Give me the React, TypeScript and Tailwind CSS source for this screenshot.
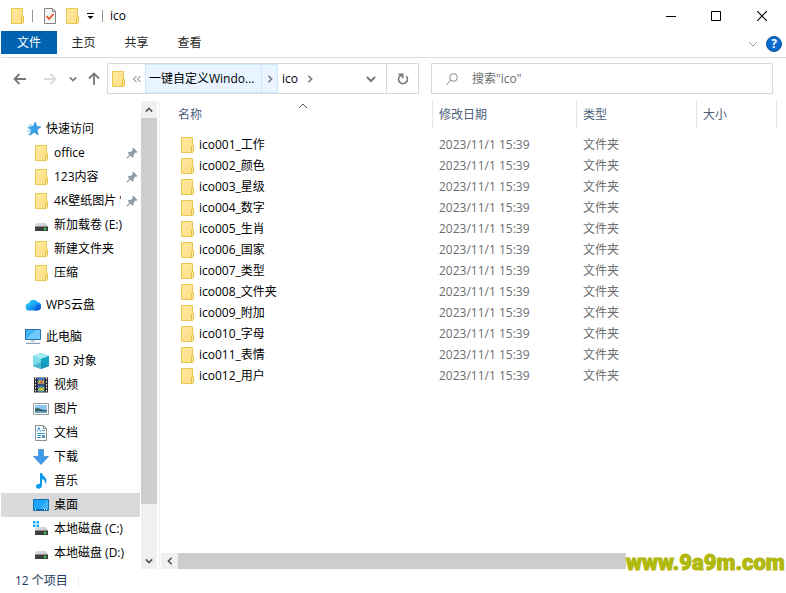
import React from 'react';

type IconProps = { className?: string };

const Svg = ({ children, className = '' }: { children: React.ReactNode; className?: string }) => (
  <svg viewBox="0 0 16 16" className={`h-4 w-4 shrink-0 ${className}`} aria-hidden="true">
    {children}
  </svg>
);

const Folder = ({ className }: IconProps) => (
  <Svg className={className}>
    <path d="M2.5.5h11v15h-11z" fill="#ffe799" stroke="#ebc750" />
    <path d="M3 13l9-12h1v14H3z" fill="#ffe08a" opacity=".7" />
    <path d="M12.500 9.500l.8-1h1.200v6l-1 1h-1z" fill="#ffe9a6" stroke="#e6bf3e" />
  </Svg>
);

const CheckDoc = () => (
  <Svg>
    <path d="M2.5.5h8l3 3v12h-11z" fill="#f4f6f8" stroke="#858585" />
    <path d="M10.500.5v3h3" fill="none" stroke="#858585" />
    <path d="M4.500 8l2.500 3L11.500 6" fill="none" stroke="#e8501e" strokeWidth="1.800" />
  </Svg>
);

const Star = () => (
  <Svg>
    <path d="M10.500 1l1 4.500 4.500.3-4 3 1.300 5.200-4-2.700-4.500 3 1.500-5L3 6l4.500-.300z" fill="#35a3ea" stroke="#1b80c8" strokeWidth=".6" />
    <path d="M4 4h3M2.500 7h3M2 10h3M3 13h2" stroke="#6fc0f2" />
  </Svg>
);

const Drive = ({ system = false }: { system?: boolean }) => (
  <Svg>
    {system && <path d="M0 0h2.500v2.500H0zM3.500 0H6v2.500H3.500zM0 3.500h2.500V6H0zM3.500 3.500H6V6H3.500z" fill="#12b0f0" />}
    <path d="M3.500 6h9.500l2 4H2z" fill="#d4d6d8" />
    <path d="M2 9h13v5H2z" fill="#3c4043" />
    <path d="M2 9.500h13" stroke="#8a8f93" />
    <path d="M11 11h2v2h-2z" fill="#33e04c" />
  </Svg>
);

const Cloud = () => (
  <Svg>
    <defs>
      <linearGradient id="cloud" x1="0" x2="1" y1="0" y2="1">
        <stop offset="0" stopColor="#3fe0f3" />
        <stop offset=".5" stopColor="#18a2f4" />
        <stop offset="1" stopColor="#0a4fdb" />
      </linearGradient>
    </defs>
    <path d="M4.500 13.500a3.600 3.600 0 01-.500-7.200 4.600 4.600 0 018.500-1.200 4.200 4.200 0 01-.500 8.400z" fill="url(#cloud)" />
    <path d="M9 13.500c2-1 1.500-6 4.500-6.200a3.200 3.200 0 01-1 6.200z" fill="#0b58df" opacity=".7" />
  </Svg>
);

const Computer = () => (
  <Svg>
    <path d="M.5.5h15v10H.5z" fill="#45b4f5" stroke="#2574a8" />
    <path d="M1 10L11 1h4v9z" fill="#71c8fa" />
    <path d="M6 11h4v2H6z" fill="#c6d2dc" />
    <path d="M2 13h12l1.500 2H.5z" fill="#8fa0b4" />
    <path d="M2 13.500h12" stroke="#dfe5ec" />
  </Svg>
);

const Cube = () => (
  <Svg>
    <path d="M8 0l8 3v10l-8 3-8-3V3z" fill="#27b4d2" />
    <path d="M0 3l8-3 8 3-8 3z" fill="#a5ecf3" />
    <path d="M0 3l8 3v10l-8-3z" fill="#7edce8" />
    <path d="M8 6l8-3v10l-8 3z" fill="#16a3c5" />
    <path d="M0 13l8-4 8 4-8 3z" fill="#0d8cae" opacity=".45" />
  </Svg>
);

const Film = () => (
  <Svg>
    <path d="M1 .5h14v15H1z" fill="#2c2c2e" />
    <path d="M2.500 1v14M13.500 1v14" stroke="#f5f5f5" strokeWidth="1" strokeDasharray="1.500 1.500" />
    <path d="M4.500 1h7v6.500h-7zM4.500 8.500h7V15h-7z" fill="#3d74c2" />
    <path d="M5 5.500l2-3 2 2 2-2v4H5z" fill="#eab62e" />
    <path d="M5 13l2-3 2 1 2-1v4H5z" fill="#b9c52f" />
    <path d="M7.500 4h2v2h-2z" fill="#d8403a" />
  </Svg>
);

const Picture = () => (
  <Svg>
    <path d="M.5 2.500h15v11H.5z" fill="#fff" stroke="#969ba0" />
    <path d="M2 4h12v8H2z" fill="#8fc6ef" />
    <path d="M2 7.500c3-1.500 5 .5 7 1s3 .5 5 .5v2H2z" fill="#36605c" />
    <path d="M2 10.500c4-1 8 0 12-.5V12H2z" fill="#6d9cc0" />
  </Svg>
);

const TextDoc = () => (
  <Svg>
    <path d="M2.5.5h8l3 3v12h-11z" fill="#fff" stroke="#8b9197" />
    <path d="M10.500.5v3h3" fill="none" stroke="#8b9197" />
    <path d="M4 6.500L6 2.500l1.500 4M9 5.500h3M4 8.500h8M4 10.500h4M4 12.500h4" fill="none" stroke="#3d93cd" />
    <path d="M9 10h3v3H9z" fill="#5a97ae" />
  </Svg>
);

const DownArrow = () => (
  <Svg>
    <path d="M5.500.5h5v7h5L8 15.500.5 7.500h5z" fill="#3e9aea" stroke="#2878c4" strokeWidth=".6" />
  </Svg>
);

const Note = () => (
  <Svg>
    <path d="M7 0h2c.3 3 4.500 4 4.500 7.500 0 1.500-.6 2.500-1.500 3.500.6-2.500-.5-4.200-3-5v6.500c0 2-1.500 3.200-3.500 3.200-1.500 0-2.500-.9-2.500-2.200 0-1.800 1.800-3 4-2.700z" fill="#0b9ceb" />
  </Svg>
);

const Desktop = () => (
  <Svg>
    <path d="M.5 2.500h15v11H.5z" fill="#1ca5fa" stroke="#1172b5" />
    <path d="M6 13L14 3h1v10z" fill="#40b6fb" />
    <path d="M1 12.500h14" stroke="#0b65a8" />
    <path d="M2 12.500h1M11 12.500h1M13 12.500h1" stroke="#fff" />
  </Svg>
);

const Pin = () => (
  <svg viewBox="0 0 12 12" className="h-3 w-3 shrink-0" aria-hidden="true">
    <path d="M7 .5L11.500 5l-1 .8-1-.3-2 2.200.2 2-1.200 1L1.800 6l1-1.200 2 .2L6.800 3 6.300 1.500z" fill="#8b99a5" />
    <path d="M4 8L1 11" stroke="#8b99a5" strokeWidth="1.300" />
  </svg>
);

type ChevronProps = { dir: 'up' | 'down' | 'left' | 'right'; size?: string; color?: string; weight?: number };

const chevronPaths = {
  up: 'M1 7l4-4 4 4',
  down: 'M1 3l4 4 4-4',
  left: 'M7 1L3 5l4 4',
  right: 'M3 1l4 4-4 4',
};

const Chevron = ({ dir, size = 'h-2.5 w-2.5', color = 'text-[#555]', weight = 2 }: ChevronProps) => (
  <svg viewBox="0 0 10 10" className={`shrink-0 ${size} ${color}`} fill="none" stroke="currentColor" strokeWidth={weight} aria-hidden="true">
    <path d={chevronPaths[dir]} />
  </svg>
);

const Arrow = ({ className }: IconProps) => (
  <svg viewBox="0 0 14 14" className={`h-3.5 w-3.5 ${className}`} fill="none" stroke="currentColor" strokeWidth="1.800" aria-hidden="true">
    <path d="M13 7H1.500M6.500 2l-5 5 5 5" />
  </svg>
);

const groups: { name: string; icon: React.ReactNode; items: { name: string; icon: React.ReactNode; pinned?: boolean }[] }[] = [
  {
    name: '快速访问',
    icon: <Star />,
    items: [
      { name: 'office', icon: <Folder />, pinned: true },
      { name: '123内容', icon: <Folder />, pinned: true },
      { name: "4K壁纸图片 '", icon: <Folder />, pinned: true },
      { name: '新加载卷 (E:)', icon: <Drive /> },
      { name: '新建文件夹', icon: <Folder /> },
      { name: '压缩', icon: <Folder /> },
    ],
  },
  { name: 'WPS云盘', icon: <Cloud />, items: [] },
  {
    name: '此电脑',
    icon: <Computer />,
    items: [
      { name: '3D 对象', icon: <Cube /> },
      { name: '视频', icon: <Film /> },
      { name: '图片', icon: <Picture /> },
      { name: '文档', icon: <TextDoc /> },
      { name: '下载', icon: <DownArrow /> },
      { name: '音乐', icon: <Note /> },
      { name: '桌面', icon: <Desktop /> },
      { name: '本地磁盘 (C:)', icon: <Drive system /> },
      { name: '本地磁盘 (D:)', icon: <Drive /> },
    ],
  },
];

const files = ['工作', '颜色', '星级', '数字', '生肖', '国家', '类型', '文件夹', '附加', '字母', '表情', '用户'].map(
  (label, i) => `ico${String(i + 1).padStart(3, '0')}_${label}`,
);

const TitleBar = () => (
  <header className="flex h-[31px] items-center pl-2">
    <Folder />
    <span className="ml-[7px] h-3 w-px bg-[#999]" />
    <button type="button" aria-label="属性" className="ml-[9px]"><CheckDoc /></button>
    <button type="button" aria-label="新建文件夹" className="ml-1.5"><Folder /></button>
    <button type="button" aria-label="自定义快速访问工具栏" className="ml-1.5 h-2">
      <svg viewBox="0 0 8 8" className="h-2 w-2" aria-hidden="true">
        <path d="M1 1.500h7" stroke="#000" />
        <path d="M1.500 4h6L4.500 7z" />
      </svg>
    </button>
    <span className="ml-2 h-3 w-px bg-[#999]" />
    <h1 className="ml-[7px] flex-1">ico</h1>
    <div className="flex pr-px text-black">
      <button type="button" aria-label="最小化" className="flex h-[30px] w-[45px] items-center justify-center">
        <svg viewBox="0 0 10 10" className="h-2.5 w-2.5"><path d="M0 5.500h10" stroke="currentColor" /></svg>
      </button>
      <button type="button" aria-label="最大化" className="flex h-[30px] w-[45px] items-center justify-center">
        <svg viewBox="0 0 10 10" className="h-2.5 w-2.5"><path d="M.5.5h9v9h-9z" fill="none" stroke="currentColor" /></svg>
      </button>
      <button type="button" aria-label="关闭" className="flex h-[30px] w-[47px] items-center justify-center">
        <svg viewBox="0 0 10 10" className="h-2.5 w-2.5"><path d="M0 0l10 10M10 0L0 10" stroke="currentColor" strokeWidth="1.200" /></svg>
      </button>
    </div>
  </header>
);

const Ribbon = () => (
  <nav className="flex h-[27px] items-start border-b border-[#dadbdc] pr-1">
    <button type="button" className="h-[23px] w-14 bg-[#0063b1] text-white">文件</button>
    <button type="button" className="h-6 w-[53px] text-[#262626]">主页</button>
    <button type="button" className="h-6 w-[53px] text-[#262626]">共享</button>
    <button type="button" className="h-6 w-[53px] text-[#262626]">查看</button>
    <div className="ml-auto flex h-[26px] items-center gap-2">
      <button type="button" aria-label="展开功能区"><Chevron dir="down" color="text-[#999]" weight={1} /></button>
      <button type="button" aria-label="帮助" className="flex h-4 w-4 items-center justify-center rounded-full border border-[#0a5299] bg-[#0a6bcf] text-xs leading-none font-bold text-white">?</button>
    </div>
  </nav>
);

const AddressRow = () => (
  <div className="flex h-[43px] items-start pt-[5px] pr-[13px]">
    <div className="flex h-[31px] w-[106px] shrink-0 items-center pl-3">
      <button type="button" aria-label="后退"><Arrow className="text-[#777]" /></button>
      <button type="button" aria-label="前进" className="ml-4"><Arrow className="rotate-180 text-[#dcdcdc]" /></button>
      <button type="button" aria-label="最近位置" className="ml-3"><Chevron dir="down" size="h-2 w-2" color="text-[#777]" /></button>
      <button type="button" aria-label="上移" className="ml-2.5"><Arrow className="rotate-90 text-[#777]" /></button>
    </div>
    <div className="grid min-w-0 flex-1 grid-cols-[312fr_342fr] gap-3">
      <div className="flex h-[31px] min-w-0 items-stretch border border-[#d9d9d9]">
        <span className="flex w-[37px] shrink-0 items-center gap-1.5 pl-0.5">
          <Folder />
          <svg viewBox="0 0 9 8" className="h-2 w-[9px]" fill="none" stroke="#666" aria-hidden="true">
            <path d="M4.500 1l-3 3 3 3M8.500 1l-3 3 3 3" />
          </svg>
        </span>
        <button type="button" className="w-[117px] shrink-0 border border-[#cce8ff] bg-[#e8f4ff] pl-[3px] text-left whitespace-nowrap">一键自定义Windo...</button>
        <button type="button" aria-label="展开" className="flex w-4 shrink-0 items-center justify-center border border-l-0 border-[#cce8ff] bg-[#e8f4ff]"><Chevron dir="right" size="h-2 w-2" color="text-[#777]" /></button>
        <button type="button" className="px-1">ico</button>
        <button type="button" aria-label="展开 ico" className="px-1"><Chevron dir="right" size="h-2 w-2" color="text-[#777]" /></button>
        <button type="button" aria-label="以前的位置" className="ml-auto w-7 pl-2"><Chevron dir="down" color="text-[#777]" /></button>
        <button type="button" aria-label="刷新" className="flex w-8 items-center justify-center border-l border-[#d9d9d9]">
          <svg viewBox="0 0 12 12" className="h-3 w-3" fill="none" stroke="#777" strokeWidth="1.700">
            <path d="M9.300 3.300A4.400 4.400 0 112.700 3.300L4.500 2" />
            <path d="M1.500 1.300h4.200v4" />
          </svg>
        </button>
      </div>
      <label className="flex h-[31px] min-w-0 items-center border border-[#d9d9d9] pl-3.5">
        <svg viewBox="0 0 12 12" className="h-3 w-3 shrink-0" fill="none" stroke="#888" aria-hidden="true">
          <circle cx="7.500" cy="4.500" r="3.800" />
          <path d="M4.800 7.200L.3 11.700" />
        </svg>
        <input type="search" aria-label="搜索" placeholder={'搜索"ico"'} className="ml-3.5 min-w-0 flex-1 bg-transparent outline-none placeholder:text-[#6d6d6d]" />
      </label>
    </div>
  </div>
);

const Sidebar = () => (
  <aside className="flex w-[159px] shrink-0 border-r border-[#f0f0f0]">
    <div className="flex w-[139px] flex-col gap-2 pt-4 pb-1">
      {groups.map((g) => (
        <section key={g.name}>
          <button type="button" className="flex h-6 w-full items-center gap-[5px] pl-6">{g.icon}{g.name}</button>
          {g.items.map((it) => (
            <button
              type="button"
              key={it.name}
              className={`flex h-6 w-full items-center gap-[5px] pr-0.5 pl-8 whitespace-nowrap ${it.name === '桌面' ? 'bg-[#d9d9d9]' : ''}`}
            >
              {it.icon}
              <span className="min-w-0 flex-1 overflow-hidden text-left">{it.name}</span>
              {it.pinned && <Pin />}
            </button>
          ))}
        </section>
      ))}
    </div>
    <div className="ml-px flex w-4 flex-col bg-[#f0f0f0]">
      <button type="button" aria-label="向上滚动" className="flex h-[17px] items-center justify-center"><Chevron dir="up" size="h-2 w-2" /></button>
      <div className="flex flex-1 flex-col">
        <div className="basis-[89%] bg-[#cdcdcd]" />
      </div>
      <button type="button" aria-label="向下滚动" className="flex h-[17px] items-center justify-center"><Chevron dir="down" size="h-2 w-2" /></button>
    </div>
  </aside>
);

const Heading = ({ children, className = 'pl-1.5' }: { children?: React.ReactNode; className?: string }) => (
  <th scope="col" className="p-0 text-left font-normal text-[#4c607a]">
    <div className={`mb-1.5 flex h-[27px] items-center border-r border-[#e5e5e5] ${className}`}>{children}</div>
  </th>
);

const FileList = () => (
  <main className="flex min-w-0 flex-1 flex-col">
    <div className="flex-1">
      <table className="w-full table-fixed border-collapse">
        <colgroup>
          <col className="w-[273px]" />
          <col className="w-36" />
          <col className="w-[120px]" />
          <col className="w-20" />
          <col />
        </colgroup>
        <thead>
          <tr>
            <Heading className="relative pl-[18px]">
              名称
              <span className="absolute top-0 left-[138px]"><Chevron dir="up" weight={1} /></span>
            </Heading>
            <Heading>修改日期</Heading>
            <Heading>类型</Heading>
            <Heading>大小</Heading>
            <td />
          </tr>
        </thead>
        <tbody>
          {files.map((f) => (
            <tr key={f} className="h-[21px]">
              <td className="p-0 pl-[19px]"><span className="flex items-center gap-1"><Folder />{f}</span></td>
              <td className="p-0 pl-1.5 text-[#6d6d6d]">2023/11/1 15:39</td>
              <td className="p-0 pl-1.5 text-[#6d6d6d]">文件夹</td>
              <td />
              <td />
            </tr>
          ))}
        </tbody>
      </table>
    </div>
    <div className="relative ml-px flex h-4 bg-[#f0f0f0]">
      <button type="button" aria-label="向左滚动" className="flex w-[17px] items-center justify-center"><Chevron dir="left" size="h-2 w-2" /></button>
      <div className="flex-1 bg-[#cdcdcd]" />
      <div className="absolute top-0 right-0 h-5 w-40 bg-white text-[22px] leading-5 font-black whitespace-nowrap text-[#b0b80c] [-webkit-text-stroke:1px_#b0b80c] [font-family:Roboto,sans-serif]">www.9a9m.com</div>
    </div>
  </main>
);

export default function App() {
  return (
    <div className="flex min-h-screen flex-col bg-white pl-px text-xs text-black [font-family:'Open_Sans','Noto_Sans_CJK_SC',sans-serif]">
      <TitleBar />
      <Ribbon />
      <AddressRow />
      <div className="flex flex-1">
        <Sidebar />
        <FileList />
      </div>
      <footer className="flex h-6 items-center pl-3.5 text-[#1e395b]">
        <span>12 个项目</span>
        <span className="ml-2.5 h-3 w-px bg-[#eee]" />
      </footer>
    </div>
  );
}
